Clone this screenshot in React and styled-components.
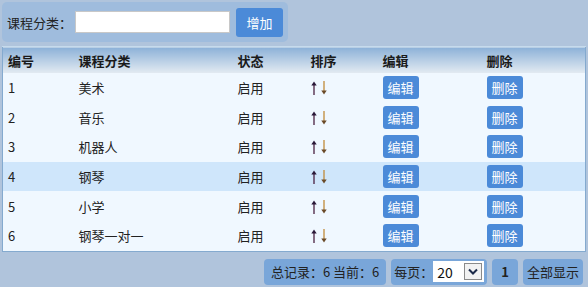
import React from "react";
import styled, { createGlobalStyle } from "styled-components";

const GlobalStyle = createGlobalStyle`
  body {
    margin: 0;
    background: #b0c4dc;
    font-family: "Noto Sans CJK SC", "Noto Sans", sans-serif;
    font-size: 13px;
    color: #1a1a1a;
  }
`;

const Page = styled.div`
  width: 588px;
  height: 287px;
  padding: 2px;
  box-sizing: border-box;
`;

const TopBar = styled.div`
  width: 286px;
  height: 40px;
  box-sizing: border-box;
  display: flex;
  align-items: center;
  padding: 0 5px;
  background: #9fbcdd;
  border-radius: 5px;
  white-space: nowrap;
`;

const Label = styled.span`
  color: #222;
  flex-shrink: 0;
  width: 68px;
`;

const TextInput = styled.input`
  flex-shrink: 0;
  width: 155px;
  height: 22px;
  box-sizing: border-box;
  border: 1px solid #c8c8c8;
  background: #fff;
  outline: none;
  margin-right: 6px;
`;

const AddButton = styled.button`
  flex-shrink: 0;
  width: 47px;
  height: 29px;
  border: none;
  border-radius: 3px;
  background: #4b8ad8;
  color: #fff;
  font-family: inherit;
  font-size: 13px;
  padding: 0;
`;

const Table = styled.table`
  margin-top: 4px;
  width: 584px;
  border-collapse: collapse;
  border: 1px solid #84aacf;
  background: #f0f8ff;
  table-layout: fixed;
`;

const HeadCell = styled.th`
  height: 26px;
  padding: 0 0 0 5px;
  text-align: left;
  font-weight: bold;
  color: #1a1a1a;
  background: linear-gradient(#8cb1d8, #e4ebf2);
  border-top: 1px solid #c6dbec;
`;

const Row = styled.tr`
  background: ${(p) => (p.$active ? "#cfe6fb" : "#f0f8ff")};
`;

const Cell = styled.td`
  height: 29.6px;
  padding: 0 0 0 5px;
  color: #222;
`;

const SortIcons = styled.span`
  display: flex;
  align-items: center;
  gap: 4px;
  padding-top: 1px;
`;

const SmallButton = styled.button`
  width: 36px;
  height: 23px;
  border: none;
  border-radius: 3px;
  background: #4b8ad8;
  color: #fff;
  font-family: inherit;
  font-size: 13px;
  padding: 0;
  display: block;
`;

const Footer = styled.div`
  margin-top: 7px;
  display: flex;
  justify-content: flex-end;
  gap: 5px;
  padding-right: 3px;
  white-space: nowrap;
`;

const Pill = styled.div`
  height: 26px;
  box-sizing: border-box;
  display: flex;
  align-items: center;
  padding: 0 ${(p) => p.$pad || 5}px;
  background: #79a6d9;
  border-radius: 4px;
  color: #222;
  font-weight: ${(p) => (p.$bold ? "bold" : "normal")};
`;

const SelectBox = styled.div`
  width: 51px;
  height: 21px;
  box-sizing: border-box;
  background: #fff;
  display: flex;
  align-items: center;
  justify-content: space-between;
  padding: 0 2px 0 4px;
  color: #111;
  font-size: 14px;
`;

const ArrowBox = styled.span`
  width: 18px;
  height: 17px;
  box-sizing: border-box;
  border: 1px solid #8a8a8a;
  background: #f2f2f2;
  display: flex;
  align-items: center;
  justify-content: center;
`;

const UpArrow = () => (
  <svg width="6" height="14" viewBox="0 0 6 14">
    <path d="M3 2 L3 14" stroke="#4a2040" strokeWidth="1.3" />
    <path d="M0.3 4.5 L3 0.5 L5.7 4.5 Z" fill="#2a1838" />
  </svg>
);

const DownArrow = () => (
  <svg width="6" height="14" viewBox="0 0 6 14">
    <path d="M3 0 L3 12" stroke="#c08a3a" strokeWidth="1.3" />
    <path d="M0.3 9.5 L3 13.5 L5.7 9.5 Z" fill="#6a4a28" />
  </svg>
);

const rows = [
  { id: 1, name: "美术" },
  { id: 2, name: "音乐" },
  { id: 3, name: "机器人" },
  { id: 4, name: "钢琴", active: true },
  { id: 5, name: "小学" },
  { id: 6, name: "钢琴一对一" },
];

export default function App() {
  return (
    <Page>
      <GlobalStyle />
      <TopBar>
        <Label>课程分类：</Label>
        <TextInput />
        <AddButton>增加</AddButton>
      </TopBar>
      <Table>
        <colgroup>
          <col style={{ width: 71 }} />
          <col style={{ width: 159 }} />
          <col style={{ width: 73 }} />
          <col style={{ width: 72 }} />
          <col style={{ width: 104 }} />
          <col />
        </colgroup>
        <thead>
          <tr>
            <HeadCell>编号</HeadCell>
            <HeadCell>课程分类</HeadCell>
            <HeadCell>状态</HeadCell>
            <HeadCell>排序</HeadCell>
            <HeadCell>编辑</HeadCell>
            <HeadCell>删除</HeadCell>
          </tr>
        </thead>
        <tbody>
          {rows.map((r) => (
            <Row key={r.id} $active={r.active}>
              <Cell>{r.id}</Cell>
              <Cell>{r.name}</Cell>
              <Cell>启用</Cell>
              <Cell>
                <SortIcons>
                  <UpArrow />
                  <DownArrow />
                </SortIcons>
              </Cell>
              <Cell>
                <SmallButton>编辑</SmallButton>
              </Cell>
              <Cell>
                <SmallButton>删除</SmallButton>
              </Cell>
            </Row>
          ))}
        </tbody>
      </Table>
      <Footer>
        <Pill $pad={7}>总记录：6 当前：6</Pill>
        <Pill $pad={3}>
          每页：
          <SelectBox>
            <span>20</span>
            <ArrowBox>
              <svg width="10" height="7" viewBox="0 0 10 7">
                <path d="M1 1.5 L5 5.5 L9 1.5" fill="none" stroke="#1c2a4a" strokeWidth="2" />
              </svg>
            </ArrowBox>
          </SelectBox>
        </Pill>
        <Pill $pad={9} $bold>1</Pill>
        <Pill $pad={4}>全部显示</Pill>
      </Footer>
    </Page>
  );
}
